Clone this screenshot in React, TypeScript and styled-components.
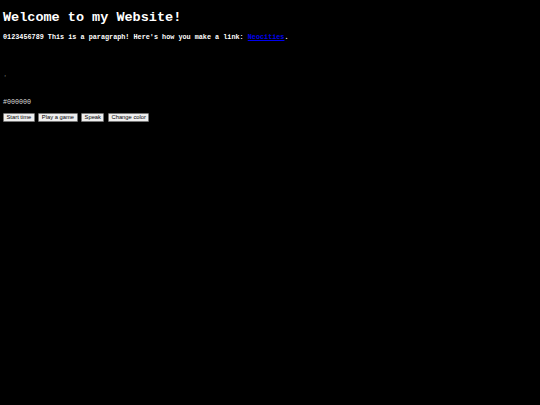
import * as React from 'react'
import styled, {createGlobalStyle} from 'styled-components'

const Global = createGlobalStyle`
  html, body {
    margin: 0;
    background: #000;
  }
  body {
    padding: 3px 3px;
    color: #fff;
    font-family: "Liberation Mono", monospace;
  }
`;

const Heading = styled.h1`
  margin: 7px 0 0;
  font-size: 13.5px;
  line-height: 16px;
  font-weight: bold;
  color: #fff;
`;

const Para = styled.p`
  margin: 7px 0 0;
  font-size: 6.8px;
  line-height: 8px;
  font-weight: bold;
`;

const Link = styled.a`
  color: #0000ee;
  text-decoration: underline;
`;

const Mark = styled.div`
  margin-top: 34px;
  height: 8px;
  font-size: 7px;
  line-height: 8px;
  color: #aaa;
`;

const ColorCode = styled.div`
  margin-top: 15px;
  font-size: 6.7px;
  line-height: 8px;
  color: #ddd;
`;

const Controls = styled.div`
  display: flex;
  gap: 3.5px;
  margin-top: 6.5px;
`;

const Button = styled.button`
  font-family: "Liberation Sans", Arial, sans-serif;
  font-size: 5.8px;
  line-height: 7px;
  height: 9.5px;
  padding: 0 2.5px;
  background: #efefef;
  color: #000;
  border: 1px solid #767676;
  border-radius: 1px;
`;

export default function App() {
  return <>
    <Global/>
    <Heading>Welcome to my Website!</Heading>
    <Para>0123456789 This is a paragraph! Here's how you make a link: <Link href="#">Neocities</Link>.</Para>
    <Mark>ʼ</Mark>
    <ColorCode>#000000</ColorCode>
    <Controls>
      <Button>Start time</Button>
      <Button>Play a game</Button>
      <Button>Speak</Button>
      <Button>Change color</Button>
    </Controls>
  </>
}
